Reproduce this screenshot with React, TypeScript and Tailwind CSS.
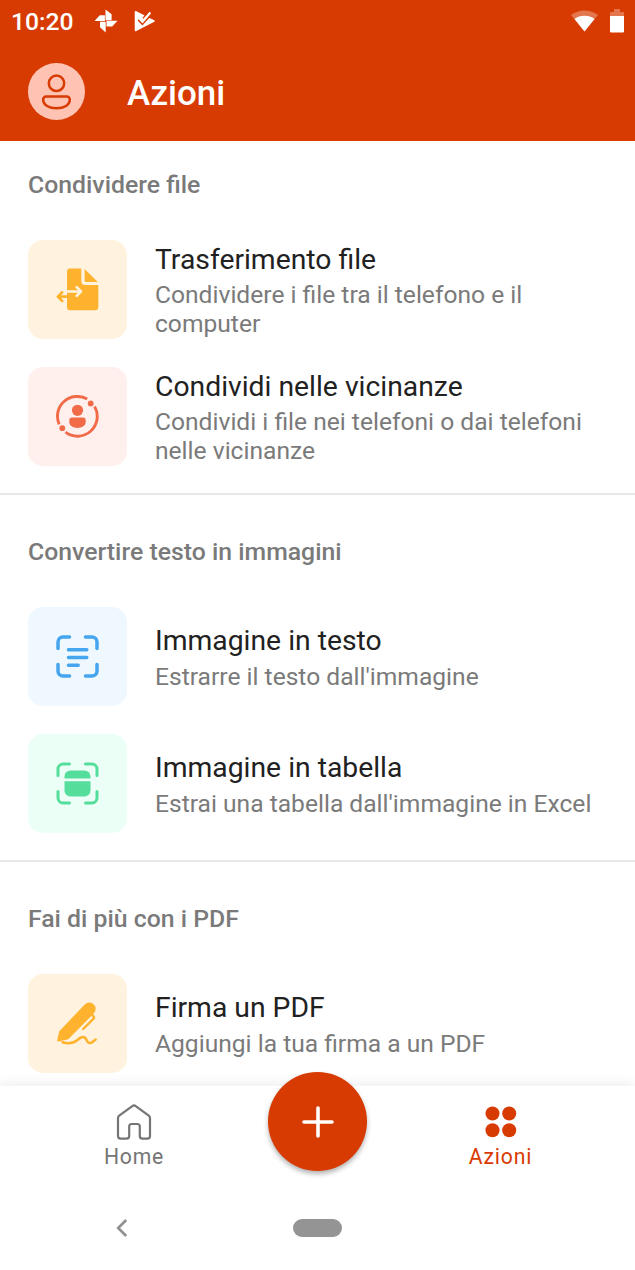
import React from 'react';

interface Action {
  id: string;
  title: string;
  description: string;
  tileClass: string;
  icon: React.ReactNode;
}

interface ActionSection {
  id: string;
  heading: string;
  actions: Action[];
}

const TransferIcon = () => (
  <svg className="w-[43px] h-[43px]" viewBox="0 0 43 43" fill="none">
    <path d="M14 .5h11.3v12.5a4 4 0 0 0 4 4H42.300v22.300a3 3 0 0 1-3 3H14a3 3 0 0 1-3-3V3.500a3 3 0 0 1 3-3Z" fill="#ffb22e" />
    <path d="M28.600 .9 41.800 14H29.600a1 1 0 0 1-1-1Z" fill="#ffb22e" />
    <path d="M11 23.500h14M20.700 19.200l4.300 4.300-4.300 4.300" stroke="#fff3df" strokeWidth="2.600" strokeLinecap="round" strokeLinejoin="round" />
    <path d="M11 28.600H2M6.200 24.300 1.800 28.600l4.400 4.400" stroke="#ffb22e" strokeWidth="2.600" strokeLinejoin="round" strokeLinecap="round" />
  </svg>
);

const NearbyIcon = () => (
  <svg className="w-[43px] h-[43px]" viewBox="0 0 43 43" fill="none">
    <path d="M31.200 4.100A19.800 19.800 0 0 0 3.200 29.300M9.500 37.200A19.800 19.800 0 0 0 38.600 11.500" stroke="#f16b48" strokeWidth="2.900" />
    <g fill="#f16b48">
      <circle cx="34.700" cy="8.500" r="2.900" />
      <circle cx="6.300" cy="33.200" r="2.900" />
      <circle cx="21.500" cy="15.300" r="5.600" />
      <path d="M16 22.600h11a2.700 2.700 0 0 1 2.700 2.700v1.500c0 4-3.700 6.200-8.200 6.200s-8.200-2.200-8.200-6.200v-1.500a2.700 2.700 0 0 1 2.700-2.700Z" />
    </g>
  </svg>
);

const ScanCorners = () => (
  <path
    d="M2 13.500V7a5 5 0 0 1 5-5h6.500M29.500 2H36a5 5 0 0 1 5 5v6.500M41 29.500V36a5 5 0 0 1-5 5h-6.500M13.500 41H7a5 5 0 0 1-5-5v-6.500"
    strokeLinecap="round"
  />
);

const ScanTextIcon = () => (
  <svg className="w-[43px] h-[43px]" viewBox="0 0 43 43" fill="none" stroke="#45a5ee" strokeWidth="3.500">
    <ScanCorners />
    <path d="M12.500 14.700h18.300M12.500 22.600h18.300M12.500 30.300h9.700" strokeLinecap="round" />
  </svg>
);

const ScanTableIcon = () => (
  <svg className="w-[43px] h-[43px]" viewBox="0 0 43 43" fill="none" stroke="#54dd9b" strokeWidth="3">
    <ScanCorners />
    <g fill="#54dd9b" stroke="none">
      <path d="M14.500 8.500h14a6 6 0 0 1 6 6v2H8.500v-2a6 6 0 0 1 6-6Z" />
      <path d="M8.500 19.200h26v9.300a6 6 0 0 1-6 6h-14a6 6 0 0 1-6-6Z" />
    </g>
  </svg>
);

const SignIcon = () => (
  <svg className="w-[43px] h-[43px]" viewBox="0 0 43 43" fill="none">
    <path d="M3.300 29.200 28.800 2.400a6.300 6.300 0 0 1 9 .1 6.300 6.300 0 0 1 .1 8.800L12.300 37.300 2.700 39.500a1.300 1.300 0 0 1-1.500-1.500Z" fill="#ffb22e" />
    <path
      d="M36 12.800 37.600 14.500a1.500 1.500 0 0 1 0 2.200L27.200 27"
      stroke="#ffb22e"
      strokeWidth="2.400"
      strokeLinecap="round"
      strokeLinejoin="round"
    />
    <path
      d="M6.500 40.200c5.500 1.600 11 1.200 15-2.200 2.200-1.900 3.500-3 5.600-2.900 4.400.3 2.900 6.300 6.900 6 2-.2 3.500-2.100 5.700-3.600"
      stroke="#ffb22e"
      strokeWidth="2.500"
      strokeLinecap="round"
      strokeLinejoin="round"
    />
  </svg>
);

const PinwheelIcon = () => (
  <svg className="w-6 h-6" viewBox="0 0 24 24" fill="#fff">
    <path d="M11.500 .5 17.600 5.300V11.200H11.500Z" />
    <path d="M23.500 11.800 18.200 17.500H12.500V11.800Z" />
    <path d="M11.700 23.500 6 18.200V12.700H11.700Z" />
    <path d="M.5 11.900 5.800 6.200H10.900V11.900Z" />
  </svg>
);

const PlayCheckIcon = () => (
  <svg className="w-[22px] h-[22px]" viewBox="0 0 22 22" fill="none">
    <path d="M1.500 1.700 8 5l4 2.200L20 11 1.500 20.500Z" fill="#fff" stroke="#fff" strokeWidth="1.500" strokeLinejoin="round" />
    <path d="m4.200 9.800 4.200 4.400L17.800 3.800" stroke="#d83b01" strokeWidth="1.800" />
    <path d="m9 8.400 4.500-5.600" stroke="#d83b01" strokeWidth="1.400" />
    <path d="m5.300 8.300 3.200 3.600 7.800-9.400" stroke="#fff" strokeWidth="2.200" />
  </svg>
);

const WifiIcon = () => (
  <svg className="w-[27px] h-[22px]" viewBox="0 0 27 22">
    <path d="M13.500 21.500 0 5C8 -1 19-1 27 5Z" fill="#fff" fillOpacity=".3" />
    <path d="M13.500 21.500 3.500 9C9 4.800 18 4.800 23.500 9Z" fill="#fff" />
  </svg>
);

const BatteryIcon = () => (
  <svg className="w-[14px] h-6" viewBox="0 0 14 24" fill="#fff">
    <path d="M4 0h6v3h3a1 1 0 0 1 1 1v3H0V4a1 1 0 0 1 1-1h3Z" fillOpacity=".3" />
    <path d="M0 7h14v15.500a1 1 0 0 1-1 1H1a1 1 0 0 1-1-1Z" />
  </svg>
);

const PersonIcon = () => (
  <svg className="w-[30px] h-9" viewBox="0 0 30 36" fill="none" stroke="#d83b01" strokeWidth="2.500">
    <circle cx="14.500" cy="9.300" r="7.700" />
    <path d="M4.200 22.500h20.600a3 3 0 0 1 3 3C27.800 31 22 34.300 14.500 34.300S1.200 31 1.200 25.500a3 3 0 0 1 3-3Z" />
  </svg>
);

const HomeIcon = () => (
  <svg className="w-9 h-9" viewBox="0 0 36 36" fill="none" stroke="#757575" strokeWidth="2.200" strokeLinejoin="round">
    <path d="M16.300 2.100a2.700 2.700 0 0 1 3.400 0L32.800 11.700a3 3 0 0 1 1.200 2.400v18a2.500 2.500 0 0 1-2.500 2.500h-5.200a2.500 2.500 0 0 1-2.500-2.500V22.500a2.500 2.500 0 0 0-2.500-2.500h-5.600a2.500 2.500 0 0 0-2.500 2.500v9.600a2.500 2.500 0 0 1-2.500 2.500H4.500a2.500 2.500 0 0 1-2.500-2.500v-18A3 3 0 0 1 3.200 11.700Z" />
  </svg>
);

const DotsIcon = () => (
  <svg className="w-8 h-8" viewBox="0 0 32 32" fill="#d83b01">
    <circle cx="7.500" cy="7.500" r="7" />
    <circle cx="24.200" cy="7.500" r="7" />
    <circle cx="7.500" cy="24.200" r="7" />
    <circle cx="24.200" cy="24.200" r="7" />
  </svg>
);

const sections: ActionSection[] = [
  {
    id: 'share',
    heading: 'Condividere file',
    actions: [
      {
        id: 'transfer',
        title: 'Trasferimento file',
        description: 'Condividere i file tra il telefono e il computer',
        tileClass: 'bg-[#fff3df]',
        icon: <TransferIcon />,
      },
      {
        id: 'nearby',
        title: 'Condividi nelle vicinanze',
        description: 'Condividi i file nei telefoni o dai telefoni nelle vicinanze',
        tileClass: 'bg-[#fff0ed]',
        icon: <NearbyIcon />,
      },
    ],
  },
  {
    id: 'convert',
    heading: 'Convertire testo in immagini',
    actions: [
      {
        id: 'image-to-text',
        title: 'Immagine in testo',
        description: "Estrarre il testo dall'immagine",
        tileClass: 'bg-[#eff8ff]',
        icon: <ScanTextIcon />,
      },
      {
        id: 'image-to-table',
        title: 'Immagine in tabella',
        description: "Estrai una tabella dall'immagine in Excel",
        tileClass: 'bg-[#ebfff7]',
        icon: <ScanTableIcon />,
      },
    ],
  },
  {
    id: 'pdf',
    heading: 'Fai di più con i PDF',
    actions: [
      {
        id: 'sign',
        title: 'Firma un PDF',
        description: 'Aggiungi la tua firma a un PDF',
        tileClass: 'bg-[#fff3df]',
        icon: <SignIcon />,
      },
    ],
  },
];

function ActionRow({ action }: { action: Action }) {
  return (
    <button type="button" className="w-full h-[99px] flex items-center text-left">
      <span className={`w-[99px] h-[99px] shrink-0 rounded-[15px] flex items-center justify-center ${action.tileClass}`}>
        {action.icon}
      </span>
      <span className="ml-7 pt-[1.5px] flex-1 flex flex-col gap-[4.5px]">
        <span className="text-[28.3px] leading-[33px] text-[#212121]">{action.title}</span>
        <span className="text-[24.6px] leading-[29px] text-[#7a7a7a]">{action.description}</span>
      </span>
    </button>
  );
}

export default function App() {
  return (
    <div className="w-[635px] h-[1270px] flex flex-col overflow-hidden bg-white font-['Roboto',sans-serif]">
      <header className="h-[141px] shrink-0 bg-[#d83b01] text-white">
        <div className="h-[42px] pl-[11px] pr-[11px] flex items-center">
          <span className="pt-[2px] text-[24.7px] leading-none font-medium">10:20</span>
          <span className="ml-[20px]">
            <PinwheelIcon />
          </span>
          <span className="ml-[16px]">
            <PlayCheckIcon />
          </span>
          <span className="ml-auto">
            <WifiIcon />
          </span>
          <span className="ml-3">
            <BatteryIcon />
          </span>
        </div>
        <div className="h-[99px] pl-7 flex items-center">
          <span className="w-[57px] h-[57px] rounded-full bg-[#ffc3b3] flex items-center justify-center">
            <PersonIcon />
          </span>
          <h1 className="ml-[42px] pt-[4px] text-[35px] leading-none font-medium">Azioni</h1>
        </div>
      </header>

      <main className="flex-1 min-h-0 overflow-hidden">
        {sections.map((section, index) => (
          <section
            key={section.id}
            className={`px-7 pb-[27px] border-b-2 border-[#e8e8e8] ${index === 0 ? '' : 'pt-[13px]'}`}
          >
            <h2 className="h-[86px] pt-px mb-[13px] flex items-center text-[24.8px] font-medium text-[#7a7a7a]">
              {section.heading}
            </h2>
            <div className="flex flex-col gap-7">
              {section.actions.map((action) => (
                <ActionRow key={action.id} action={action} />
              ))}
            </div>
          </section>
        ))}
      </main>

      <nav className="relative h-[99px] shrink-0 bg-white shadow-[0_-4px_10px_rgba(0,0,0,0.06)] flex">
        <button type="button" className="w-[268px] pt-[18px] flex flex-col items-center text-[#757575]">
          <HomeIcon />
          <span className="mt-[4px] text-[21.2px] leading-[25px] tracking-[0.8px]">Home</span>
        </button>
        <button type="button" className="ml-auto w-[269px] pt-[20px] flex flex-col items-center text-[#d83b01]">
          <DotsIcon />
          <span className="mt-[6px] text-[21.2px] leading-[25px] tracking-[0.8px]">Azioni</span>
        </button>
        {/* floating create button, straddles the top edge of the bar */}
        <button
          type="button"
          aria-label="Crea"
          className="absolute left-[268px] -top-[14px] w-[99px] h-[99px] rounded-full bg-[#d83b01] shadow-[0_3px_5px_rgba(0,0,0,0.3)] flex items-center justify-center"
        >
          <svg className="w-8 h-8" viewBox="0 0 32 32" stroke="#fff" strokeWidth="3.600" strokeLinecap="round">
            <path d="M16 2v28M2 16h28" />
          </svg>
        </button>
      </nav>

      <div className="relative h-[85px] shrink-0 pl-[116px] flex items-center bg-white">
        <svg className="w-3 h-[18px]" viewBox="0 0 12 18" fill="none" stroke="#919191" strokeWidth="2.700">
          <path d="M10.200 1 2.200 9l8 8" />
        </svg>
        <span className="ml-[165px] w-[49px] h-[18px] rounded-full bg-[#949494]" />
      </div>
    </div>
  );
}
